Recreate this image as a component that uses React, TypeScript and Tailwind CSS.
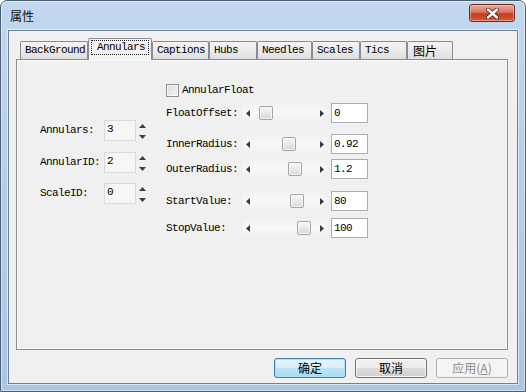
import React from "react";

const MONO = "font-['Liberation_Mono',monospace] text-[11px] tracking-[-0.6px] text-black leading-none";
const CJK = "font-['Noto_Sans_CJK_SC','Noto_Sans_CJK_JP',sans-serif] text-[12px] leading-none";

function Tab({ label, className, cjk }: { label: string; className: string; cjk?: boolean }) {
  return (
    <div
      className={`h-[18px] border border-b-0 border-[#898c95] rounded-t-[2px] bg-[linear-gradient(180deg,#f4f4f4_0%,#ebebeb_50%,#dedede_100%)] pl-[4px] flex items-center ${className}`}
    >
      <span className={cjk ? `${CJK} text-black` : MONO}>{label}</span>
    </div>
  );
}

function SelectedTab() {
  return (
    <div className="relative z-10 -mb-px h-[22px] w-[64px] border border-b-0 border-[#898c95] rounded-t-[2px] bg-[#f3f3f3] px-[2px] pt-[1px]">
      <div className="h-[15px] border border-dotted border-[#222] flex items-center pl-[5px]">
        <span className={MONO}>Annulars</span>
      </div>
    </div>
  );
}

function UpTri() {
  return (
    <svg width="7" height="4" viewBox="0 0 7 4">
      <path d="M0 4 L3.5 0 L7 4Z" fill="#3f3f3f" />
    </svg>
  );
}
function DownTri() {
  return (
    <svg width="7" height="4" viewBox="0 0 7 4">
      <path d="M0 0 L7 0 L3.5 4Z" fill="#3f3f3f" />
    </svg>
  );
}
function LeftTri() {
  return (
    <svg width="4" height="7" viewBox="0 0 4 7">
      <path d="M4 0 L0 3.5 L4 7Z" fill="#3a3a3a" />
    </svg>
  );
}
function RightTri() {
  return (
    <svg width="4" height="7" viewBox="0 0 4 7">
      <path d="M0 0 L4 3.5 L0 7Z" fill="#3a3a3a" />
    </svg>
  );
}

function SpinRow({ label, value, className }: { label: string; value: string; className: string }) {
  return (
    <div className={`flex h-[21px] items-center ${className}`}>
      <div className={`w-[64px] ${MONO}`}>{label}</div>
      <div className="w-[32px] h-[21px] border border-[#d9d9d9] bg-[#f6f6f6] pl-[2px] pt-[3px] flex items-start">
        <span className={MONO}>{value}</span>
      </div>
      <div className="ml-[3px] h-[21px] flex flex-col pt-[4px] gap-[7px]">
        <UpTri />
        <DownTri />
      </div>
    </div>
  );
}

function Slider({ thumb }: { thumb: number }) {
  return (
    <div className="relative w-[84px] h-[18px] bg-[linear-gradient(180deg,#f2f2f2_0%,#f8f8f8_50%,#f0f0f0_100%)] flex items-center justify-between px-[3px]">
      <LeftTri />
      <div
        className="absolute top-[2px] w-[14px] h-[14px] rounded-[2px] border border-[#a4a4a4] bg-[linear-gradient(180deg,#f7f7f7_0%,#e9e9e9_50%,#d6d6d6_100%)] shadow-[inset_0_0_0_1px_rgba(255,255,255,0.7)]"
        style={{ left: thumb }}
      />
      <RightTri />
    </div>
  );
}

function SliderRow({ label, value, thumb, className }: { label: string; value: string; thumb: number; className: string }) {
  return (
    <div className={`flex h-[20px] items-center ${className}`}>
      <div className={`w-[77px] ${MONO}`}>{label}</div>
      <Slider thumb={thumb} />
      <div className="ml-[4px] w-[37px] h-[20px] border border-[#abadb3] bg-white flex items-center pl-[2px]">
        <span className={MONO}>{value}</span>
      </div>
    </div>
  );
}

function Button({ label, kind }: { label: React.ReactNode; kind: "default" | "normal" | "disabled" }) {
  const base = "w-[72px] h-[20px] rounded-[3px] flex items-center justify-center";
  if (kind === "default")
    return (
      <div className={`${base} border border-[#3c7fb1] bg-[linear-gradient(180deg,#e9f5fc_0%,#d9eefa_50%,#bfe3f7_51%,#a9d8f2_100%)] shadow-[inset_0_0_0_1px_#a6e2fb]`}>
        <span className={`${CJK} text-black`}>{label}</span>
      </div>
    );
  if (kind === "normal")
    return (
      <div className={`${base} border border-[#707070] bg-[linear-gradient(180deg,#f2f2f2_0%,#ebebeb_50%,#dddddd_51%,#cfcfcf_100%)] shadow-[inset_0_0_0_1px_rgba(255,255,255,0.8)]`}>
        <span className={`${CJK} text-black`}>{label}</span>
      </div>
    );
  return (
    <div className={`${base} border border-[#adb2b5] bg-[#f4f4f4]`}>
      <span className={`${CJK} text-[#8c8c8c]`}>{label}</span>
    </div>
  );
}

export default function App() {
  return (
    <div className="w-[526px] h-[392px] overflow-hidden bg-white">
      <div className="w-[526px] h-[392px] flex flex-col rounded-t-[7px] border border-[#4f5f72] bg-[linear-gradient(180deg,#c3d8ee_0%,#b9d1ea_30%,#b2cce7_70%,#a9c6e3_100%)] shadow-[inset_0_0_0_1px_rgba(255,255,255,0.45)]">
        {/* title bar */}
        <div className="h-[29px] flex items-start justify-between">
          <div className={`${CJK} text-[#111] pl-[9px] pt-[9px]`}>属性</div>
          <div className="mt-[3px] mr-[10px] w-[46px] h-[18px] rounded-[3px] border border-[#6b2a1f] bg-[linear-gradient(180deg,#e9a99a_0%,#d9765f_45%,#c23a1c_55%,#d35b3a_100%)] shadow-[inset_0_0_0_1px_rgba(255,220,210,0.5)] flex items-center justify-center">
            <svg width="13" height="11" viewBox="0 0 13 11">
              <path d="M2 1.5 L11 9.5 M11 1.5 L2 9.5" stroke="#5a1a10" strokeWidth="4" strokeLinecap="round" />
              <path d="M2 1.5 L11 9.5 M11 1.5 L2 9.5" stroke="#ffffff" strokeWidth="2.4" strokeLinecap="round" />
            </svg>
          </div>
        </div>
        {/* client */}
        <div className="mx-[7px] mb-[7px] flex-1 flex flex-col border border-[#6d8096] bg-[#f0f0f0] shadow-[0_0_0_1px_rgba(255,255,255,0.55)]">
          <div className="mt-[7px] ml-[11px] h-[21px] flex items-end">
            <Tab label="BackGround" className="w-[68px]" />
            <SelectedTab />
            <Tab label="Captions" className="w-[57px]" />
            <Tab label="Hubs" className="w-[48px]" />
            <Tab label="Needles" className="w-[55px]" />
            <Tab label="Scales" className="w-[48px]" />
            <Tab label="Tics" className="w-[47px]" />
            <Tab label="图片" className="w-[46px] pl-[5px]" cjk />
          </div>
          <div className="ml-[7px] mr-[9px] h-[291px] border border-[#898c95] bg-[#f0f0f0] shadow-[inset_0_0_0_1px_#fbfbfb] flex">
            {/* left column */}
            <div className="ml-[23px] w-[126px] flex flex-col">
              <SpinRow label="Annulars:" value="3" className="mt-[60px]" />
              <SpinRow label="AnnularID:" value="2" className="mt-[11px]" />
              <SpinRow label="ScaleID:" value="0" className="mt-[10px]" />
            </div>
            {/* right column */}
            <div className="flex flex-col">
              <div className="mt-[24px] h-[13px] flex items-center">
                <div className="w-[13px] h-[13px] border border-[#8e8f8f] bg-[linear-gradient(135deg,#dcdcdc_0%,#f4f4f4_100%)] shadow-[inset_0_0_0_1px_#f8f8f8]" />
                <span className={`ml-[3px] ${MONO}`}>AnnularFloat</span>
              </div>
              <SliderRow label="FloatOffset:" value="0" thumb={16} className="mt-[6px]" />
              <SliderRow label="InnerRadius:" value="0.92" thumb={39} className="mt-[11px]" />
              <SliderRow label="OuterRadius:" value="1.2" thumb={45} className="mt-[5px]" />
              <SliderRow label="StartValue:" value="80" thumb={47} className="mt-[12px]" />
              <SliderRow label="StopValue:" value="100" thumb={54} className="mt-[7px]" />
            </div>
          </div>
          <div className="mt-[8px] mr-[9px] flex justify-end gap-[9px]">
            <Button label="确定" kind="default" />
            <Button label="取消" kind="normal" />
            <Button
              label={
                <>
                  应用(<span className="underline">A</span>)
                </>
              }
              kind="disabled"
            />
          </div>
        </div>
      </div>
    </div>
  );
}
